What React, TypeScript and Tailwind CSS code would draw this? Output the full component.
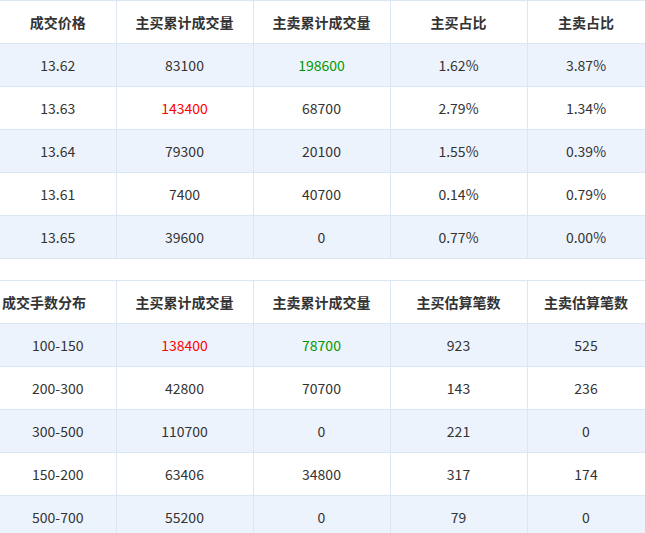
const T1 = {
  head: ["成交价格", "主买累计成交量", "主卖累计成交量", "主买占比", "主卖占比"],
  rows: [
    ["13.62", "83100", "198600", "1.62%", "3.87%"],
    ["13.63", "143400", "68700", "2.79%", "1.34%"],
    ["13.64", "79300", "20100", "1.55%", "0.39%"],
    ["13.61", "7400", "40700", "0.14%", "0.79%"],
    ["13.65", "39600", "0", "0.77%", "0.00%"],
  ],
  colors: { "0-2": "g", "1-1": "r" } as Record<string, string>,
};
const T2 = {
  head: ["成交手数分布", "主买累计成交量", "主卖累计成交量", "主买估算笔数", "主卖估算笔数"],
  rows: [
    ["100-150", "138400", "78700", "923", "525"],
    ["200-300", "42800", "70700", "143", "236"],
    ["300-500", "110700", "0", "221", "0"],
    ["150-200", "63406", "34800", "317", "174"],
    ["500-700", "55200", "0", "79", "0"],
  ],
  colors: { "0-1": "r", "0-2": "g" } as Record<string, string>,
};

function Table({ t, first }: { t: typeof T1; first: boolean }) {
  const widths = ["w-[116px]", "w-[137px]", "w-[137px]", "w-[137px]", "w-[118px]"];
  return (
    <table className="border-collapse table-fixed w-[645px]">
      <thead>
        <tr className="h-[43px] bg-white">
          {t.head.map((h, i) => (
            <th key={i} className={`${widths[i]} border border-[#dce6f5] ${i === 0 ? "border-l-0" : ""} font-bold text-[14px] text-[#333] ${i === 0 && !first ? "text-left pl-[2px]" : "text-center"}`}>{h}</th>
          ))}
        </tr>
      </thead>
      <tbody>
        {t.rows.map((r, ri) => (
          <tr key={ri} className={`h-[43px] ${ri % 2 === 0 ? "bg-[#edf3fd]" : "bg-white"}`}>
            {r.map((c, ci) => {
              const col = t.colors[`${ri}-${ci}`];
              return (
                <td key={ci} className={`border border-[#dce6f5] ${ci === 0 ? "border-l-0" : ""} text-center text-[14px] ${col === "r" ? "text-[#ff0000]" : col === "g" ? "text-[#009900]" : "text-[#333]"}`}>{c}</td>
              );
            })}
          </tr>
        ))}
      </tbody>
    </table>
  );
}

export default function App() {
  return (
    <div className="w-[645px] h-[533px] overflow-hidden bg-white" style={{ fontFamily: '"Noto Sans CJK SC", "Microsoft YaHei", sans-serif' }}>
      <Table t={T1} first />
      <div className="h-[21px]" />
      <Table t={T2} first={false} />
    </div>
  );
}
